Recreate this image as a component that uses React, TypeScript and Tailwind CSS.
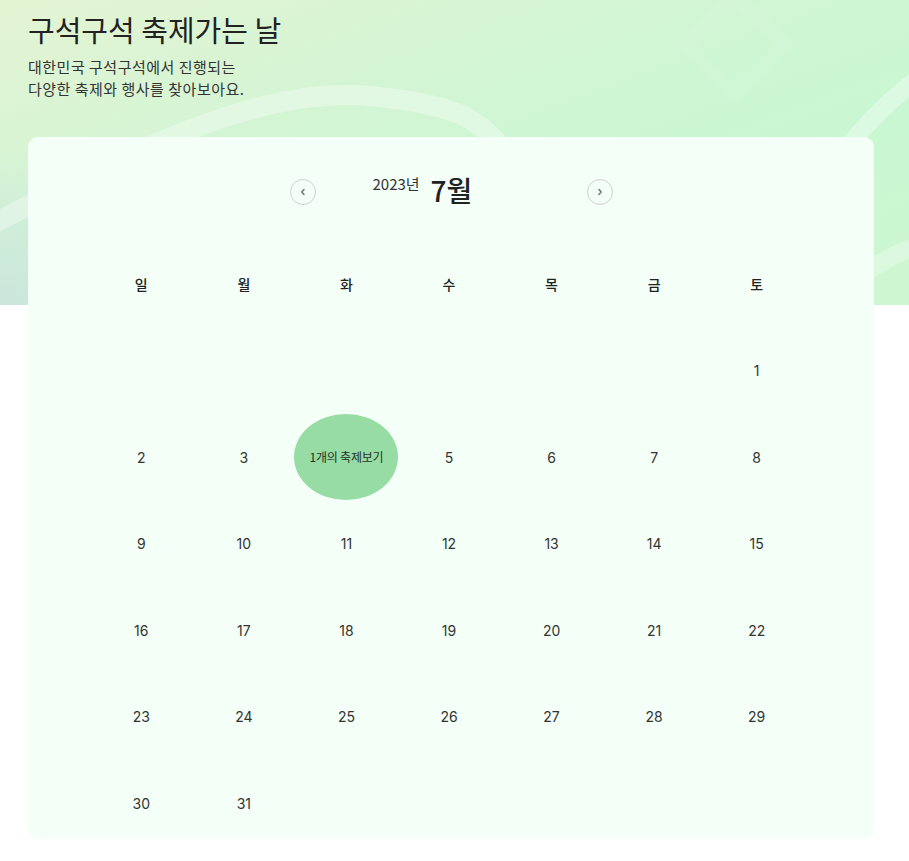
import React from 'react';

const WEEK = ['일', '월', '화', '수', '목', '금', '토'];

// 2023년 7월: 1일은 토요일
const buildDays = (): (number | null)[] => {
  const days: (number | null)[] = Array(6).fill(null);
  for (let d = 1; d <= 31; d++) days.push(d);
  while (days.length % 7 !== 0) days.push(null);
  return days;
};

const festivals: Record<number, number> = { 4: 1 };

const Chevron = ({ dir }: { dir: 'left' | 'right' }) => (
  <svg width="8" height="8" viewBox="0 0 8 8" fill="none">
    <path
      d={dir === 'left' ? 'M5 1.5 L2.8 4 L5 6.5' : 'M3 1.5 L5.2 4 L3 6.5'}
      stroke="#7a7a7a"
      strokeWidth="1.6"
      strokeLinecap="round"
      strokeLinejoin="round"
    />
  </svg>
);

const HeroDecoration = () => (
  <svg className="absolute inset-0 h-full w-full" viewBox="0 0 909 305" preserveAspectRatio="none" fill="none">
    <path d="M-30 236 C 100 168, 250 84, 370 96 S 480 128, 540 190" stroke="white" strokeOpacity="0.35" strokeWidth="20" />
    <path d="M845 150 C 870 120, 890 98, 930 70" stroke="white" strokeOpacity="0.35" strokeWidth="18" />
    <path d="M866 272 C 880 262, 895 254, 930 240" stroke="white" strokeOpacity="0.3" strokeWidth="18" />
    <rect x="700" y="10" width="70" height="70" transform="rotate(45 735 45)" stroke="white" strokeOpacity="0.06" strokeWidth="14" />
  </svg>
);

export default function App() {
  const days = buildDays();

  return (
    <div
      className="relative min-h-[861px] bg-white text-[#222]"
      style={{ fontFamily: '"Noto Sans CJK KR", "Noto Sans", sans-serif' }}
    >
      {/* hero background */}
      <div className="absolute left-0 right-0 top-0 h-[305px] overflow-hidden bg-[linear-gradient(160deg,#e4f4d3_0%,#d3f5d4_35%,#c9f7d2_70%,#cdf7cf_100%)]">
        <div className="absolute bottom-0 left-0 h-[160px] w-[420px] bg-[radial-gradient(ellipse_at_bottom_left,#cbe6dc_0%,rgba(203,230,220,0)_70%)]" />
        <HeroDecoration />
      </div>

      <div className="relative px-7 pt-[7px]">
        <h1 className="text-[29px] font-normal leading-[44px] text-[#222]">구석구석 축제가는 날</h1>
        <p className="mt-[5px] text-[15px] leading-[22px] tracking-[0.5px] text-[#333]">
          대한민국 구석구석에서 진행되는
          <br />
          다양한 축제와 행사를 찾아보아요.
        </p>

        {/* calendar card */}
        <div className="mt-[37px] h-[702px] w-[846px] overflow-hidden rounded-[10px] bg-[#f4fff7] pl-[62px] pr-[62px]">
          <div className="flex items-center justify-center pt-[42px]">
            <button className="flex h-[26px] w-[26px] items-center justify-center rounded-full border border-[#cfcfcf] bg-transparent">
              <Chevron dir="left" />
            </button>
            <div className="flex h-[26px] w-[271px] items-start pl-[57px]">
              <span className="mt-[-6px] text-[15px] leading-[22px] text-[#333]">2023년</span>
              <span className="ml-[11px] mt-[-9px] text-[28px] font-medium leading-[40px] text-[#222]">7월</span>
            </div>
            <button className="flex h-[26px] w-[26px] items-center justify-center rounded-full border border-[#cfcfcf] bg-transparent">
              <Chevron dir="right" />
            </button>
          </div>

          <div className="mt-[35.75px] grid w-[718px] grid-cols-7 auto-rows-[86.5px]">
            {WEEK.map((w) => (
              <div key={w} className="flex items-center justify-center text-[14px] font-medium text-[#222]">
                {w}
              </div>
            ))}
            {days.map((d, i) => (
              <div
                key={i}
                className="flex items-center justify-center text-[14px] text-[#333]"
                style={{ fontFamily: 'Inter, "Noto Sans CJK KR", sans-serif' }}
              >
                {d !== null &&
                  (festivals[d] ? (
                    <div
                      className="flex h-[86px] w-[104px] shrink-0 items-center justify-center rounded-[50%] bg-[#97dca4] text-[12px] tracking-[-0.2px] text-[#253328]"
                      style={{ fontFamily: '"Noto Sans CJK KR", sans-serif' }}
                    >
                      {festivals[d]}개의 축제보기
                    </div>
                  ) : (
                    d
                  ))}
              </div>
            ))}
          </div>
        </div>
      </div>
    </div>
  );
}
